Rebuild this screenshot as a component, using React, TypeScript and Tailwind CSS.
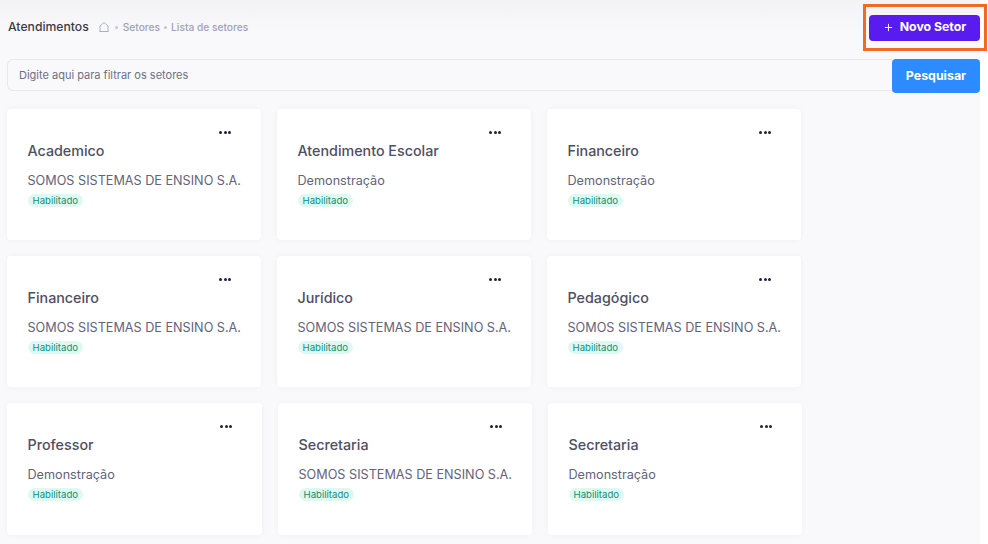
import { Plus } from 'lucide-react';

interface Sector {
  name: string;
  company: string;
}

const rows: Sector[][] = [
  [
    { name: 'Academico', company: 'SOMOS SISTEMAS DE ENSINO S.A.' },
    { name: 'Atendimento Escolar', company: 'Demonstração' },
    { name: 'Financeiro', company: 'Demonstração' },
  ],
  [
    { name: 'Financeiro', company: 'SOMOS SISTEMAS DE ENSINO S.A.' },
    { name: 'Jurídico', company: 'SOMOS SISTEMAS DE ENSINO S.A.' },
    { name: 'Pedagógico', company: 'SOMOS SISTEMAS DE ENSINO S.A.' },
  ],
  [
    { name: 'Professor', company: 'Demonstração' },
    { name: 'Secretaria', company: 'SOMOS SISTEMAS DE ENSINO S.A.' },
    { name: 'Secretaria', company: 'Demonstração' },
  ],
];

function SectorCard({ sector, wide }: { sector: Sector; wide?: boolean }) {
  return (
    <div className={`relative h-full rounded bg-white pl-[20.5px] pt-[33px] shadow-[0_0_6px_rgba(60,60,90,0.04)] ${wide ? 'w-[255px]' : 'w-[254px]'}`}>
      <div className="absolute right-[30px] top-[22px] flex gap-[1.5px]">
        <span className="h-[3px] w-[3px] rounded-full bg-[#1e2139]" />
        <span className="h-[3px] w-[3px] rounded-full bg-[#1e2139]" />
        <span className="h-[3px] w-[3px] rounded-full bg-[#1e2139]" />
      </div>
      <div className="text-[14.3px] font-[450] leading-[18px] text-[#4f4f63]">{sector.name}</div>
      <div className="mt-[13px] whitespace-nowrap text-[12.65px] leading-[16px] text-[#63637a]">{sector.company}</div>
      <span className="mt-[5px] block w-fit rounded-full bg-[#dff9f2] px-[5px] text-[9.6px] leading-[13px] text-[#0f8f78]">
        Habilitado
      </span>
    </div>
  );
}

export default function App() {
  return (
    <div className="relative h-[544px] w-[988px] overflow-hidden bg-gradient-to-b from-[#f3f3f5] via-[#f9f9fb] via-[6%] to-[#f9f9fb] font-['Inter',sans-serif]">
      <div className="absolute inset-y-0 right-0 w-[8px] bg-white" />

      <div className="relative flex h-[55px] items-center justify-between px-[8px]">
        <div className="flex items-center">
          <span className="text-[12.2px] font-[450] text-[#3a3a4a]">Atendimentos</span>
          <svg viewBox="0 0 12 12" fill="none" stroke="#a5a5c4" strokeWidth="0.9" className="ml-[9px] h-[12px] w-[12px]">
            <path d="M1.5 10.5h9M2 10.5V5l4-3.5L10 5v5.5" strokeLinejoin="round" />
          </svg>
          <span className="mx-[5px] h-[3px] w-[3px] rounded-full bg-[#c5c5d8]" />
          <span className="text-[10.2px] font-medium text-[#a1a1b8]">Setores</span>
          <span className="mx-[4px] h-[3px] w-[3px] rounded-full bg-[#c5c5d8]" />
          <span className="text-[10.2px] font-medium text-[#a1a1b8]">Lista de setores</span>
        </div>
        <button className="flex h-[26px] w-[111px] items-center justify-center rounded-sm bg-[#5a1bf0] text-[12.3px] font-bold text-white">
          <Plus className="mr-[6px] h-[11px] w-[11px]" strokeWidth={2} />
          Novo Setor
        </button>
      </div>

      <div className="relative ml-[7px] mt-[4px] flex h-[34px] w-[973px] items-start">
        <div className="flex h-[32px] flex-1 items-center rounded-l-md border border-r-0 border-[#e8e8ec] pl-[11px] text-[11px] text-[#6f6f84]">
          Digite aqui para filtrar os setores
        </div>
        <button className="h-[34px] w-[88px] rounded-sm bg-[#2b8bff] text-[12.4px] font-bold text-white">Pesquisar</button>
      </div>

      <div className="relative ml-[7px] mt-[16px] grid grid-rows-[131px_131px_132px] gap-[16px]">
        {rows.map((row, i) => (
          <div key={i} className="flex gap-[16px]">
            {row.map((sector, j) => (
              <SectorCard key={sector.name + sector.company} sector={sector} wide={i === 2 && j === 0} />
            ))}
          </div>
        ))}
      </div>

      <div className="pointer-events-none absolute left-[863px] top-[4px] h-[47px] w-[124px] border-[3px] border-[#f26a21]" />
    </div>
  );
}
